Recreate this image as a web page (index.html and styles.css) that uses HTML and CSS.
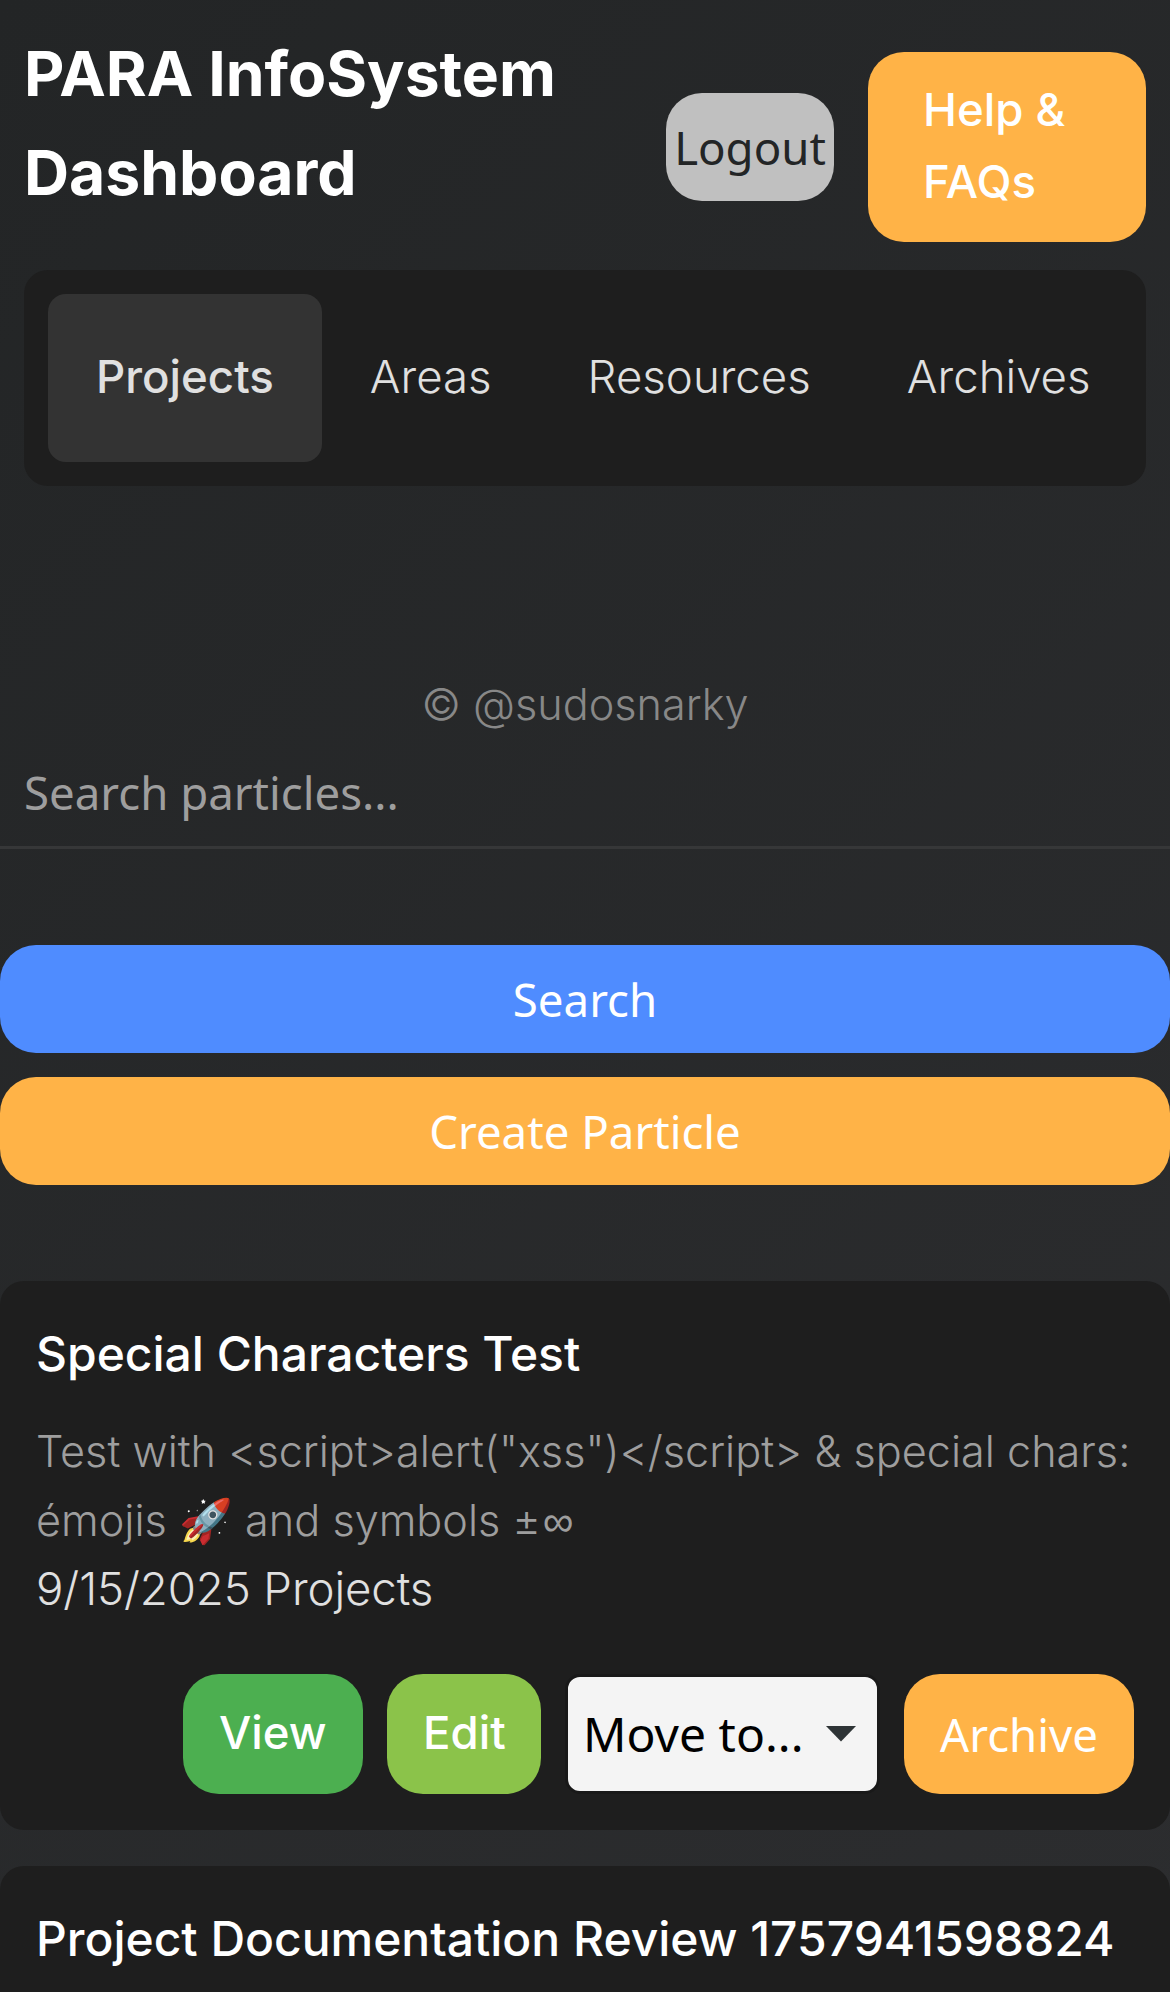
FILE: index.html
```html
<!DOCTYPE html>
<html lang="en">
<head>
<meta charset="utf-8">
<title>PARA InfoSystem Dashboard</title>
<link rel="stylesheet" href="styles.css">
</head>
<body>
<header class="header">
  <h1 class="title">PARA InfoSystem Dashboard</h1>
  <button class="btn logout">Logout</button>
  <a class="help">Help &amp; FAQs</a>
</header>
<nav class="tabs">
  <a class="tab active">Projects</a>
  <a class="tab">Areas</a>
  <a class="tab">Resources</a>
  <a class="tab">Archives</a>
</nav>
<footer class="credit">© @sudosnarky</footer>
<main>
  <form class="search">
    <input class="field" type="text" placeholder="Search particles...">
    <button class="btn primary" type="button">Search</button>
    <button class="btn accent" type="button">Create Particle</button>
  </form>
  <section class="cards">
    <article class="card">
      <h2 class="card-title">Special Characters Test</h2>
      <p class="desc">Test with &lt;script&gt;alert("xss")&lt;/script&gt; &amp; special chars: émojis 🚀 and symbols ±<span class="symbol">∞</span></p>
      <p class="meta">9/15/2025 Projects</p>
      <div class="actions">
        <a class="action view">View</a>
        <a class="action edit">Edit</a>
        <div class="select">
          <span>Move to...</span>
          <svg class="arrow" width="30" height="16" viewBox="0 0 30 16"><path d="M0 0H30L15 15.500Z" fill="#2e3436"/></svg>
        </div>
        <button class="action archive">Archive</button>
      </div>
    </article>
    <article class="card card-last">
      <h2 class="card-title">Project Documentation Review 1757941598824</h2>
    </article>
  </section>
</main>
</body>
</html>
```
FILE: styles.css
```css
* { box-sizing: border-box; }

html { background: #232527; }

body {
  margin: 0;
  height: 1992px;
  overflow: hidden;
  background: linear-gradient(135deg, #232526 0%, #2c2d2f 100%);
  color: #e0e0e0;
  font: 300 45.6px/72px Inter, sans-serif;
}

h1, h2, p { margin: 0; }

button, input {
  font: 400 45.6px/60px "Noto Sans", sans-serif;
  border: 0;
  padding: 0;
}

.header {
  display: flex;
  align-items: center;
  height: 246px;
  margin: 24px 24px 0;
}

.title {
  width: 642px;
  padding-right: 60px;
  margin-bottom: 48px;
  color: #fff;
  font-size: 62.4px;
  font-weight: 700;
  line-height: 99px;
}

.btn {
  height: 108px;
  border-radius: 36px;
  color: #fff;
}

.logout {
  width: 168px;
  margin-right: 34px;
  background: #c0c0c0;
  color: #232526;
}

.help {
  width: 278px;
  height: 190px;
  padding: 22px 54px 24px 55px;
  border-radius: 36px;
  background: #ffb347;
  color: #fff;
  font-weight: 500;
}

.tabs {
  display: flex;
  height: 216px;
  margin: 0 24px;
  padding: 24px;
  border-radius: 24px;
  background: #1e1e1e;
}

.tab {
  height: 168px;
  padding: 47px 48px 49px;
  border-radius: 18px;
}

.active {
  background: #333;
  font-weight: 500;
}

.credit {
  margin: 184px 0 1px;
  color: #888;
  font-size: 43.2px;
  line-height: 69px;
  text-align: center;
}

.search {
  display: flex;
  flex-direction: column;
  gap: 24px;
}

.field {
  height: 109px;
  margin-bottom: 72px;
  padding: 0 24px 2px;
  border-bottom: 3px solid #363738;
  background: transparent;
}

.field::placeholder { color: #9e9e9e; opacity: 1; }

.primary { background: #4f8cff; }
.accent { background: #ffb347; }

.cards {
  display: flex;
  flex-direction: column;
  gap: 36px;
  margin-top: 96px;
}

.card {
  height: 549px;
  padding: 36px;
  border-radius: 24px;
  background: #1e1e1e;
}

.card-last {
  height: 126px;
  padding-bottom: 0;
  border-radius: 24px 24px 0 0;
}

.card-title {
  color: #fff;
  font-size: 48px;
  font-weight: 500;
  line-height: 73px;
  letter-spacing: -0.02px;
}

.desc {
  height: 138px;
  margin-top: 27px;
  color: #9e9e9e;
  font-size: 43.2px;
  line-height: 69px;
}

.symbol {
  margin-left: 2px;
  font-family: "Liberation Sans", sans-serif;
  line-height: 1;
}

.meta {
  line-height: 68px;
  letter-spacing: -0.08px;
}

.actions {
  display: flex;
  justify-content: flex-end;
  gap: 24px;
  margin-top: 51px;
}

.action {
  height: 120px;
  padding: 23px 36px 25px;
  border-radius: 36px;
  color: #fff;
  font-weight: 500;
}

.view { width: 180px; background: #4caf50; }
.edit { width: 154px; background: #8bc34a; }

.archive {
  width: 230px;
  padding: 0;
  background: #ffb347;
  font-weight: 400;
}

.select {
  display: flex;
  align-items: center;
  width: 315px;
  height: 120px;
  padding: 0 21px 0 15px;
  border: 3px solid #191919;
  border-radius: 15px;
  background: #f4f4f4;
  color: #000;
  font: 400 48px/60px "Noto Sans", sans-serif;
}

.arrow { margin-left: auto; }
```
